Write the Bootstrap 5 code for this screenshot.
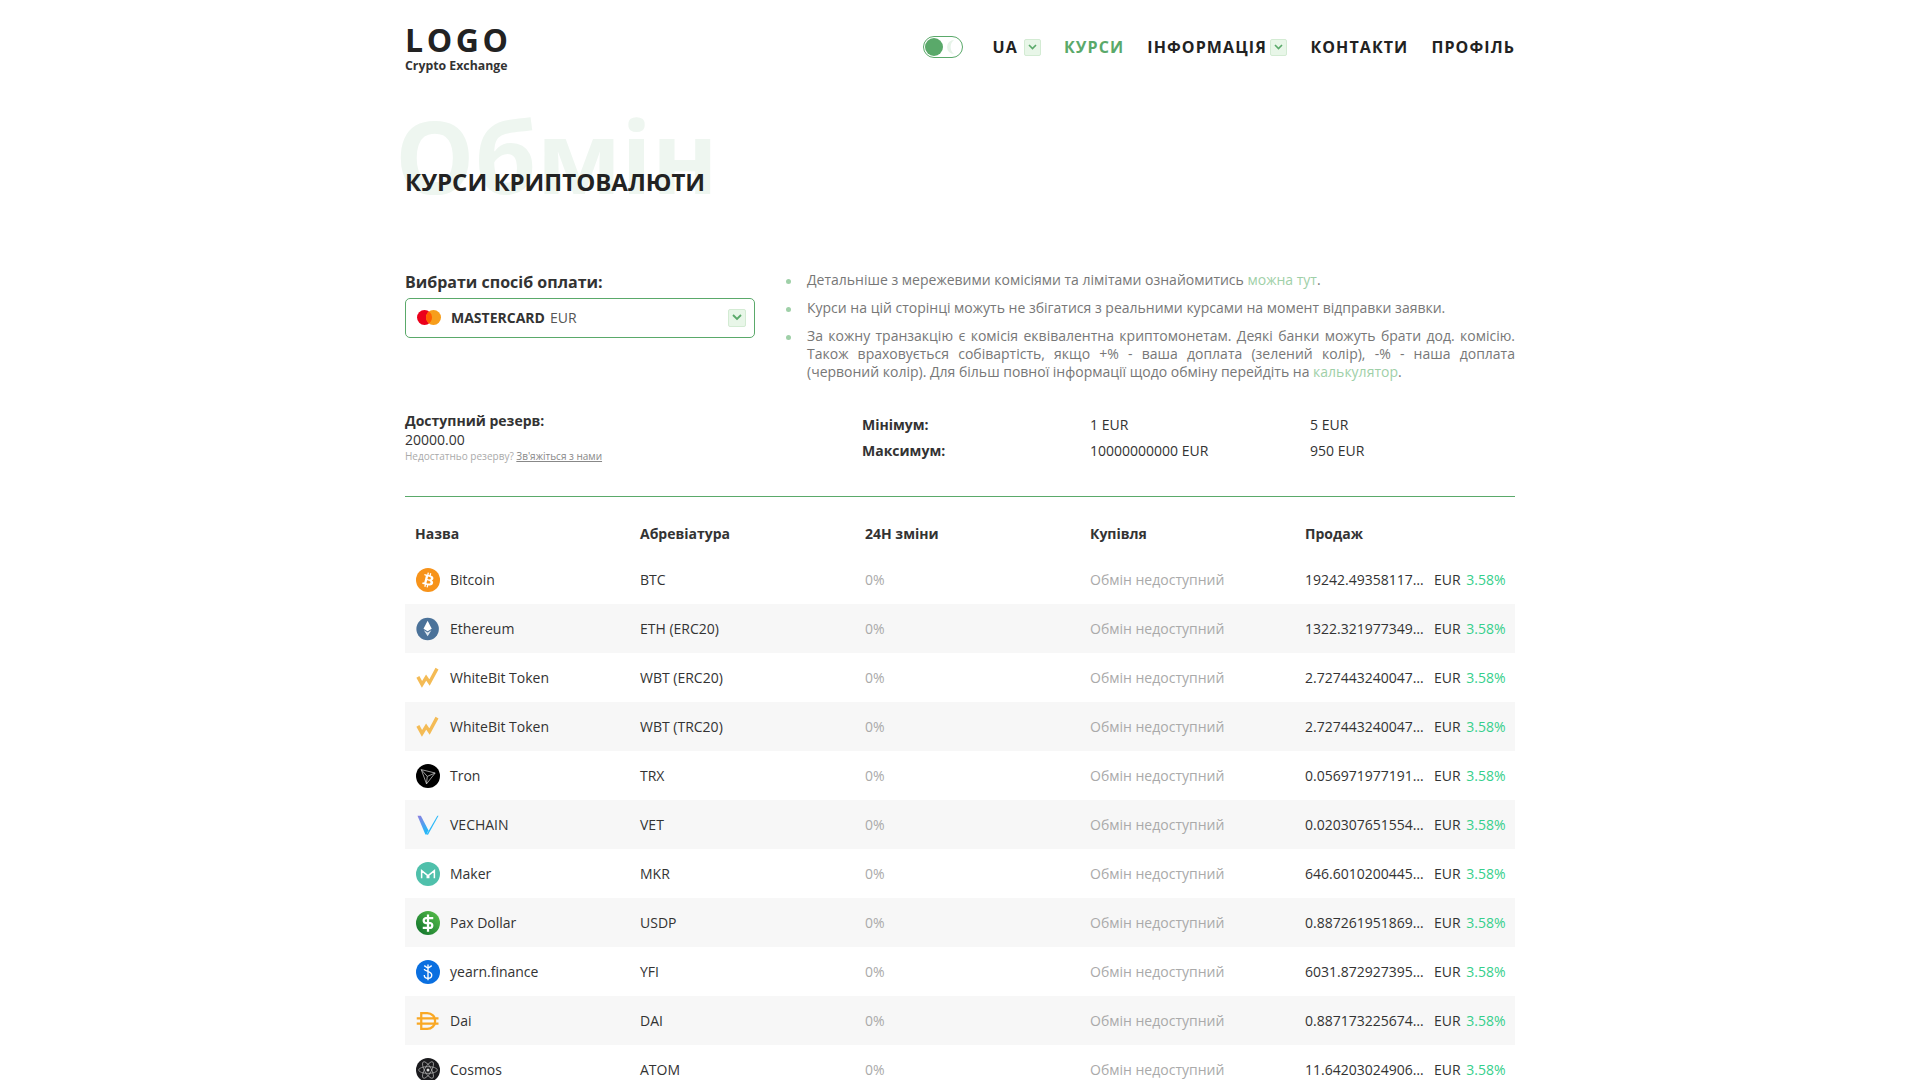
<!DOCTYPE html>
<html lang="uk">
<head>
    <meta charset="UTF-8">
    <meta name="viewport" content="width=device-width, initial-scale=1.0">
    <title>Курси криптовалюти</title>
    <link rel="stylesheet" href="https://cdn.jsdelivr.net/npm/bootstrap@5.3.0/dist/css/bootstrap.min.css">
    <script src="https://cdn.jsdelivr.net/npm/bootstrap@5.3.3/dist/js/bootstrap.bundle.min.js"></script>
    <style>
        html, body {
            height: 100vh;
            overflow: hidden;
        }

        body {
            font-family: "Open Sans", "Noto Sans", sans-serif;
            font-size: 14px;
            color: #333;
            background: #fff;
        }

        a { color: #9fd0a8; text-decoration: none; }

        .page-wrap {
            width: 1110px;
            margin: 0 auto;
        }

        /* header */
        .top-bar {
            height: 94px;
            padding-top: 21px;
        }

        .logo-main {
            font-size: 32px;
            line-height: 38px;
            font-weight: 700;
            letter-spacing: 3.6px;
            color: #222;
        }

        .logo-sub {
            font-size: 12.3px;
            line-height: 15px;
            font-weight: 700;
            color: #333;
            margin-top: -1px;
        }

        .top-nav {
            gap: 23px;
            font-size: 16px;
            font-weight: 700;
            letter-spacing: 1.1px;
            color: #222;
            height: 52px;
        }

        .top-nav a { color: #222; }
        .top-nav a.is-active { color: #5aa96a; }

        .theme-switch {
            width: 40px;
            height: 22px;
            border: 1px solid #5aa96a;
            border-radius: 11px;
            padding: 1px;
            margin-right: 7px;
        }

        .theme-knob {
            width: 18px;
            height: 18px;
            border-radius: 50%;
            background: #5aa96a;
        }

        .chev-box {
            width: 17px;
            height: 17px;
            background: #e8f6e8;
            border: 1px solid #d3ebd3;
            border-radius: 2px;
            margin-left: 6px;
        }

        .top-nav .info-chev { margin-left: 3.5px; }

        /* title */
        .title-block {
            height: 177px;
        }

        .ghost-title {
            position: absolute;
            left: -10px;
            top: -7px;
            font-size: 100px;
            line-height: 136px;
            font-weight: 700;
            color: #eef6f0;
            white-space: nowrap;
        }

        .page-title {
            position: relative;
            font-size: 24px;
            line-height: 36px;
            font-weight: 700;
            color: #222;
            margin: 0;
            padding-top: 70px;
        }

        /* payment + notes */
        .pay-col { width: 350px; }

        .pay-label {
            font-size: 16px;
            line-height: 22px;
            font-weight: 700;
            color: #333;
            margin-bottom: 5px;
        }

        .pay-select {
            height: 40px;
            border: 1px solid #5aa96a;
            border-radius: 5px;
            padding: 0 8px 1px 11px;
        }

        .pay-select b { color: #333; margin-left: 10px; font-weight: 700; }
        .pay-select span { color: #555; margin-left: 5px; }
        .pay-select .chev-box { width: 18px; height: 18px; margin-left: auto; }

        .notes-list {
            list-style: none;
            padding: 0;
            margin: 0 0 0 28px;
            width: 732px;
            font-size: 14px;
            line-height: 18px;
            color: #777;
        }

        .notes-list li {
            position: relative;
            padding-left: 24px;
            margin-bottom: 10px;
            text-align: justify;
        }

        .notes-list li::before {
            content: "";
            position: absolute;
            left: 3px;
            top: 8px;
            width: 5px;
            height: 5px;
            border-radius: 50%;
            background: #9fd0a8;
        }

        /* limits */
        .limits-row {
            height: 86px;
            border-bottom: 1px solid #5aa96a;
            margin-top: 20px;
        }

        .reserve-title {
            font-size: 14px;
            line-height: 19px;
            font-weight: 700;
            color: #333;
        }

        .reserve-sum { line-height: 19px; color: #333; }
        .reserve-note { font-size: 10px; line-height: 14px; color: #aaa; }
        .reserve-note a { color: #888; text-decoration: underline; }

        .limits-grid {
            position: absolute;
            left: 457px;
            top: 1px;
            width: 660px;
        }

        .limit-line { height: 26px; line-height: 26px; }
        .limit-line b { flex: 0 0 228px; font-weight: 700; color: #333; }
        .limit-line span { flex: 0 0 220px; }

        /* rates */
        .rates-table {
            table-layout: fixed;
            width: 1110px;
            margin: 0;
        }

        .rates-table th,
        .rates-table td {
            height: 49px;
            padding: 0 0 0 10px;
            vertical-align: middle;
            color: #333;
            white-space: nowrap;
        }

        .rates-table th { height: 58px; font-weight: 700; padding-top: 26px; vertical-align: top; }
        .rates-table tbody tr:nth-child(even) td { background-color: #f7f7f7; }
        .rates-table td.muted-cell { color: #aaa; }

        .coin-ico { width: 24px; height: 24px; flex: none; margin: 0 10px 0 1px; }

        .sell-num {
            display: inline-block;
            width: 122px;
        }

        .sell-cur { margin-left: 7px; }
        .sell-pct { color: #36cf8c; margin-left: 2px; }
    </style>
</head>
<body>
    <div class="page-wrap">

        <!-- Header -->
        <header class="top-bar d-flex justify-content-between align-items-start">
            <div>
                <div class="logo-main">LOGO</div>
                <div class="logo-sub">Crypto Exchange</div>
            </div>
            <nav class="top-nav d-flex align-items-center">
                <div class="theme-switch d-flex align-items-center justify-content-between">
                    <div class="theme-knob"></div>
                    <svg width="16" height="16" viewBox="0 0 16 16"><path d="M9 1a7 7 0 1 0 0 14A9 9 0 0 1 9 1z" fill="#e6f3e8"/></svg>
                </div>
                <a href="#" class="d-flex align-items-center">UA<span class="chev-box d-flex align-items-center justify-content-center"><svg width="9" height="6" viewBox="0 0 9 6"><path d="M1 1l3.5 3.5L8 1" fill="none" stroke="#5aa96a" stroke-width="1.6"/></svg></span></a>
                <a href="#" class="is-active">КУРСИ</a>
                <a href="#" class="d-flex align-items-center">ІНФОРМАЦІЯ<span class="chev-box info-chev d-flex align-items-center justify-content-center"><svg width="9" height="6" viewBox="0 0 9 6"><path d="M1 1l3.5 3.5L8 1" fill="none" stroke="#5aa96a" stroke-width="1.6"/></svg></span></a>
                <a href="#">КОНТАКТИ</a>
                <a href="#">ПРОФІЛЬ</a>
            </nav>
        </header>

        <!-- Title -->
        <div class="title-block position-relative">
            <div class="ghost-title">Обмін</div>
            <h1 class="page-title">КУРСИ КРИПТОВАЛЮТИ</h1>
        </div>

        <!-- Payment method and notes -->
        <div class="d-flex">
            <div class="pay-col">
                <div class="pay-label">Вибрати спосіб оплати:</div>
                <div class="pay-select d-flex align-items-center">
                    <svg width="24" height="15" viewBox="0 0 24 15"><circle cx="7.5" cy="7.5" r="7.5" fill="#eb001b"/><circle cx="16.5" cy="7.5" r="7.5" fill="#f79e1b"/><path d="M12 1.5a7.5 7.5 0 0 1 0 12 7.5 7.5 0 0 1 0-12z" fill="#ff5f00"/></svg>
                    <b>MASTERCARD</b><span>EUR</span>
                    <div class="chev-box d-flex align-items-center justify-content-center"><svg width="10" height="7" viewBox="0 0 10 7"><path d="M1 1l4 4 4-4" fill="none" stroke="#5aa96a" stroke-width="1.8"/></svg></div>
                </div>
            </div>
            <ul class="notes-list">
                <li>Детальніше з мережевими комісіями та лімітами ознайомитись <a href="#">можна тут</a>.</li>
                <li>Курси на цій сторінці можуть не збігатися з реальними курсами на момент відправки заявки.</li>
                <li>За кожну транзакцію є комісія еквівалентна криптомонетам. Деякі банки можуть брати дод. комісію. Також враховується собівартість, якщо +% - ваша доплата (зелений колір), -% - наша доплата (червоний колір). Для більш повної інформації щодо обміну перейдіть на <a href="#">калькулятор</a>.</li>
            </ul>
        </div>

        <!-- Reserve and limits -->
        <div class="limits-row position-relative">
            <div class="reserve-title">Доступний резерв:</div>
            <div class="reserve-sum">20000.00</div>
            <div class="reserve-note">Недостатньо резерву? <a href="#">Зв'яжіться з нами</a></div>
            <div class="limits-grid">
                <div class="limit-line d-flex"><b>Мінімум:</b><span>1 EUR</span><span>5 EUR</span></div>
                <div class="limit-line d-flex"><b>Максимум:</b><span>10000000000 EUR</span><span>950 EUR</span></div>
            </div>
        </div>

        <!-- Rates -->
        <table class="table table-borderless rates-table">
            <colgroup>
                <col style="width:225px"><col style="width:225px"><col style="width:225px"><col style="width:215px"><col style="width:220px">
            </colgroup>
            <thead>
                <tr><th>Назва</th><th>Абревіатура</th><th>24Н зміни</th><th>Купівля</th><th>Продаж</th></tr>
            </thead>
            <tbody id="rates-body"></tbody>
        </table>
    </div>

    <script>
        // coin icons, 24x24
        const icons = {
            btc: '<circle cx="16" cy="16" r="16" fill="#f7931a"/><path fill="#fff" d="M23.189 14.02c.314-2.096-1.283-3.223-3.465-3.975l.708-2.84-1.728-.43-.69 2.765c-.454-.114-.92-.22-1.385-.326l.695-2.783L15.596 6l-.708 2.839c-.376-.086-.746-.17-1.104-.26l.002-.009-2.384-.595-.46 1.846s1.283.294 1.256.312c.7.175.826.638.805 1.006l-.806 3.235c.048.012.11.03.18.057l-.183-.045-1.13 4.532c-.086.212-.303.531-.793.41.018.025-1.256-.313-1.256-.313l-.858 1.978 2.25.561c.418.105.828.215 1.231.318l-.715 2.872 1.727.43.708-2.84c.472.127.93.245 1.378.357l-.706 2.828 1.728.43.715-2.866c2.948.558 5.164.333 6.097-2.333.752-2.146-.037-3.385-1.588-4.192 1.13-.26 1.98-1.003 2.207-2.538zm-3.95 5.538c-.533 2.147-4.148.986-5.32.695l.95-3.805c1.172.293 4.929.872 4.37 3.11zm.535-5.569c-.487 1.953-3.495.96-4.47.717l.86-3.45c.975.243 4.118.696 3.61 2.733z"/>',
            eth: '<circle cx="15.500" cy="16" r="15" fill="#4b7299"/><path fill="#fff" d="M15.500 5l5.500 10.500-5.500 3.500-5.500-3.500z"/><path fill="#dfe8f0" d="M15.500 20.500l5-3-5 8-5-8z"/>',
            wbt: '<path fill="none" stroke="#f4bb55" stroke-width="4.500" d="M2.500 14.500L8 24.500l5.500-9L18 22 28 3.500"/>',
            trx: '<circle cx="16" cy="16" r="16" fill="#000"/><path fill="none" stroke="#ccc" stroke-width="1" d="M7 7.500l18.500 4.500L14 26.500zM7 7.500l8 9 10.500-4.500M15 16.500l-1 10"/>',
            vet: '<defs><linearGradient id="vg" x1="0" y1="0" x2=".6" y2="1"><stop offset="0" stop-color="#8f7de0"/><stop offset="1" stop-color="#25b7f8"/></linearGradient></defs><path fill="url(#vg)" d="M2 3.500h4.500L16.500 23l-2.500 5.500h-1.500z"/><path fill="#2bb8f8" d="M14 28.500L28.500 3.500H30L16 29z"/>',
            mkr: '<circle cx="16" cy="16" r="16" fill="#4fc0ab"/><path fill="none" stroke="#fff" stroke-width="2" d="M7.500 21.500v-10L15 17.500v4M24.500 21.500v-10L17 17.500v4"/>',
            usdp: '<defs><linearGradient id="pg" x1="0" y1="1" x2="1" y2="0"><stop offset="0" stop-color="#0b6e2a"/><stop offset="1" stop-color="#5cc24c"/></linearGradient></defs><circle cx="16" cy="16" r="16" fill="url(#pg)"/><path fill="none" stroke="#fff" stroke-width="3" d="M23 9.500H13a3.300 3.300 0 0 0 0 6.500h6a3.300 3.300 0 0 1 0 6.500H9M16 4.500v23"/>',
            yfi: '<circle cx="16" cy="16" r="16" fill="#0a6fe0"/><path fill="none" stroke="#fff" stroke-width="1.800" d="M11 7.500l5 3.500 5-3.500M11 12c0 3 10 3 10 8 0 3-2 4.500-5 4.500s-5-1.500-5-4.500M16 6v21"/>',
            dai: '<path fill="none" stroke="#f9a825" stroke-width="3" d="M7 5.500h8c6 0 10.500 4.500 10.500 10.500S21 26.500 15 26.500H7zM1 12.500h29M1 19.500h29"/>',
            atom: '<circle cx="16" cy="16" r="16" fill="#1b1b1e"/><g fill="none" stroke="#bbb" stroke-width=".9"><ellipse cx="16" cy="16" rx="12.500" ry="4.500"/><ellipse cx="16" cy="16" rx="12.500" ry="4.500" transform="rotate(60 16 16)"/><ellipse cx="16" cy="16" rx="12.500" ry="4.500" transform="rotate(120 16 16)"/></g><circle cx="16" cy="16" r="2" fill="#ddd"/>'
        };

        const coins = [
            ['btc', 'Bitcoin', 'BTC', '19242.49358117…'],
            ['eth', 'Ethereum', 'ETH (ERC20)', '1322.321977349…'],
            ['wbt', 'WhiteBit Token', 'WBT (ERC20)', '2.727443240047…'],
            ['wbt', 'WhiteBit Token', 'WBT (TRC20)', '2.727443240047…'],
            ['trx', 'Tron', 'TRX', '0.056971977191…'],
            ['vet', 'VECHAIN', 'VET', '0.020307651554…'],
            ['mkr', 'Maker', 'MKR', '646.6010200445…'],
            ['usdp', 'Pax Dollar', 'USDP', '0.887261951869…'],
            ['yfi', 'yearn.finance', 'YFI', '6031.872927395…'],
            ['dai', 'Dai', 'DAI', '0.887173225674…'],
            ['atom', 'Cosmos', 'ATOM', '11.64203024906…']
        ];

        document.getElementById('rates-body').innerHTML = coins.map(c => `
            <tr>
                <td><div class="d-flex align-items-center"><svg class="coin-ico" viewBox="0 0 32 32">${icons[c[0]]}</svg>${c[1]}</div></td>
                <td>${c[2]}</td>
                <td class="muted-cell">0%</td>
                <td class="muted-cell">Обмін недоступний</td>
                <td><span class="sell-num">${c[3]}</span><span class="sell-cur">EUR</span> <span class="sell-pct">3.58%</span></td>
            </tr>`).join('');
    </script>
</body>
</html>
